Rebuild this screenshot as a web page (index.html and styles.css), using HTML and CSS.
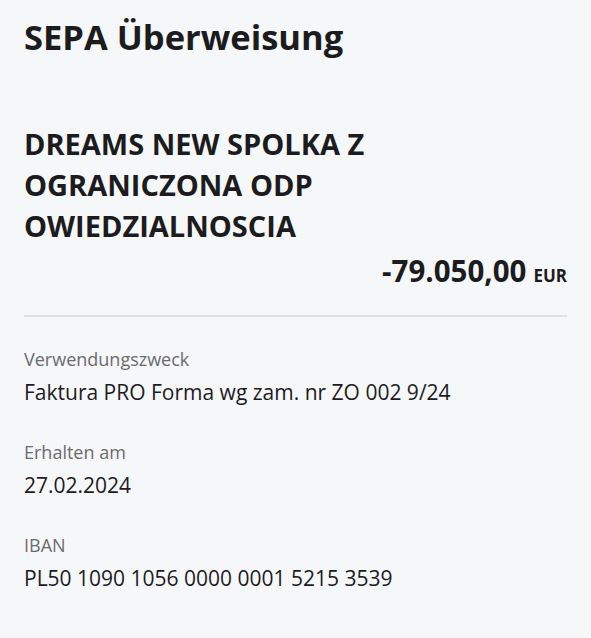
FILE: index.html
```html
<!DOCTYPE html>
<html lang="de">
<head>
<meta charset="utf-8">
<title>SEPA Überweisung</title>
<link rel="stylesheet" href="styles.css">
</head>
<body>
<main class="page">
  <h1 class="title">SEPA Überweisung</h1>
  <section class="summary">
    <h2 class="name">DREAMS NEW SPOLKA Z OGRANICZONA ODP OWIEDZIALNOSCIA</h2>
    <div class="amount"><span class="value">-79.050,00</span><span class="currency">EUR</span></div>
  </section>
  <hr class="divider">
  <section class="fields">
    <div class="field">
      <div class="label">Verwendungszweck</div>
      <div class="text">Faktura PRO Forma wg zam. nr ZO 002 9/24</div>
    </div>
    <div class="field">
      <div class="label">Erhalten am</div>
      <div class="text">27.02.2024</div>
    </div>
    <div class="field">
      <div class="label">IBAN</div>
      <div class="text">PL50 1090 1056 0000 0001 5215 3539</div>
    </div>
  </section>
</main>
</body>
</html>
```

FILE: styles.css
```css
html, body {
  margin: 0;
  padding: 0;
  background: #f6f7f9;
}
body {
  font-family: "Open Sans", "Noto Sans", sans-serif;
  color: #1c1c1e;
}
.page {
  padding: 17px 24px 0 24px;
  display: flex;
  flex-direction: column;
}
.title {
  margin: 0;
  font-size: 34.5px;
  line-height: 40px;
  font-weight: 700;
}
.summary {
  margin-top: 66px;
  display: flex;
  flex-direction: column;
}
.name {
  margin: 0;
  font-size: 29px;
  line-height: 41px;
  font-weight: 700;
  width: 420px;
}
.amount {
  margin-top: 9px;
  align-self: flex-end;
  display: flex;
  align-items: baseline;
  gap: 7px;
}
.amount .value {
  font-size: 29.5px;
  line-height: 32px;
  font-weight: 700;
}
.amount .currency {
  font-size: 17px;
  font-weight: 700;
}
.divider {
  margin: 28px 0 0 0;
  border: 0;
  height: 2px;
  background: #dcdfe5;
}
.fields {
  margin-top: 31px;
  display: flex;
  flex-direction: column;
  gap: 36px;
}
.field {
  display: flex;
  flex-direction: column;
  gap: 9px;
}
.label {
  font-size: 18px;
  line-height: 22px;
  color: #6b6b6e;
}
.text {
  font-size: 21px;
  line-height: 26px;
}
```
